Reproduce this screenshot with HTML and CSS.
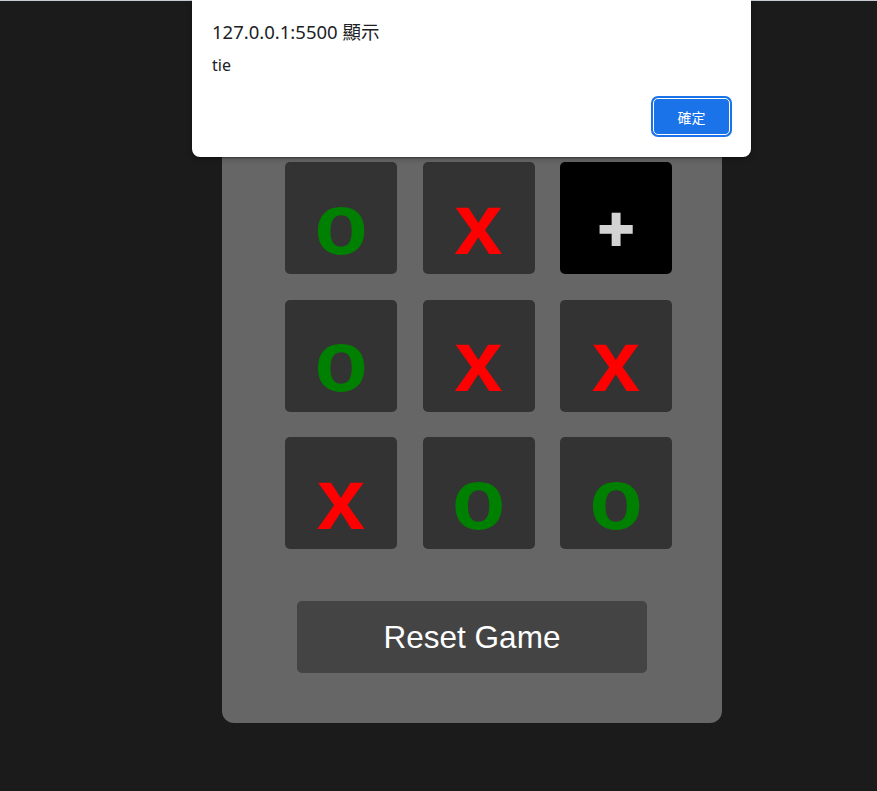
FILE: index.html
```html
<!DOCTYPE html>
<html lang="zh-Hant">
<head>
<meta charset="utf-8">
<title>Tic Tac Toe</title>
<link rel="stylesheet" href="styles.css">
</head>
<body>
<main class="page">
  <section class="panel">
    <h1 class="title">Tic Tac Toe</h1>
    <div class="board">
      <div class="cell o">o</div>
      <div class="cell x">x</div>
      <div class="cell hover">+</div>
      <div class="cell o">o</div>
      <div class="cell x">x</div>
      <div class="cell x">x</div>
      <div class="cell x">x</div>
      <div class="cell o">o</div>
      <div class="cell o">o</div>
    </div>
    <button class="reset">Reset Game</button>
  </section>
</main>
<div class="alert">
  <div class="alert-title">127.0.0.1:5500 顯示</div>
  <div class="alert-msg">tie</div>
  <div class="alert-actions">
    <button class="alert-ok">確定</button>
  </div>
</div>
</body>
</html>
```
FILE: styles.css
```css
html {
  border-top: 1px solid #c6cbd6;
  background: #1b1b1b;
}
body {
  margin: 0;
  background: #1b1b1b;
  font-family: "Liberation Sans", Arial, sans-serif;
  min-height: 790px;
}
.page {
  display: flex;
  justify-content: flex-start;
  padding-left: 222px;
}
.panel {
  margin-top: 20px;
  width: 500px;
  background: #666666;
  border-radius: 12px;
  padding: 30px 0 50px;
  box-sizing: border-box;
  display: flex;
  flex-direction: column;
  align-items: center;
}
.title {
  margin: 0 0 51px;
  height: 60px;
  line-height: 60px;
  color: #ffffff;
  font-size: 32px;
}
.board {
  display: grid;
  grid-template-columns: repeat(3, 112px);
  grid-auto-rows: 112px;
  column-gap: 25.5px;
  row-gap: 25.5px;
  margin-left: 13px;
}
.cell {
  background: #333333;
  border-radius: 5px;
  display: flex;
  align-items: center;
  justify-content: center;
  box-sizing: border-box;
  padding-top: 10px;
  font-size: 87px;
  font-weight: bold;
  line-height: 1;
}
.cell.o { color: #008000; }
.cell.x { color: #ff0000; }
.cell.hover {
  background: #000000;
  color: #d3d3d3;
  font-size: 62px;
  padding-top: 22px;
  -webkit-text-stroke: 2px #d3d3d3;
}
.reset {
  margin-top: 52px;
  width: 350px;
  height: 72px;
  background: #444444;
  color: #ffffff;
  border: none;
  border-radius: 5px;
  font-family: "Liberation Sans", Arial, sans-serif;
  font-size: 31.5px;
  padding: 0;
}
.alert {
  position: absolute;
  top: 0;
  left: 192px;
  width: 559px;
  height: 157px;
  box-sizing: border-box;
  background: #ffffff;
  border-radius: 0 0 8px 8px;
  box-shadow: 0 1px 2px rgba(0,0,0,0.35), 0 2px 6px rgba(0,0,0,0.2);
  padding: 19px 20px 0 20px;
  font-family: "Noto Sans", "Noto Sans CJK TC", sans-serif;
  color: #202124;
}
.alert-title {
  font-size: 18.5px;
  line-height: 26px;
}
.alert-msg {
  margin-top: 9px;
  font-size: 16px;
  line-height: 22px;
}
.alert-actions {
  display: flex;
  justify-content: flex-end;
  margin-top: 22px;
  padding-right: 1px;
}
.alert-ok {
  width: 77px;
  height: 37px;
  background: #1a73e8;
  color: #ffffff;
  border: 1px solid #ffffff;
  border-radius: 5px;
  box-shadow: 0 0 0 2px #1a73e8;
  font-family: "Noto Sans CJK TC", sans-serif;
  font-size: 14px;
  padding: 0;
}
```
